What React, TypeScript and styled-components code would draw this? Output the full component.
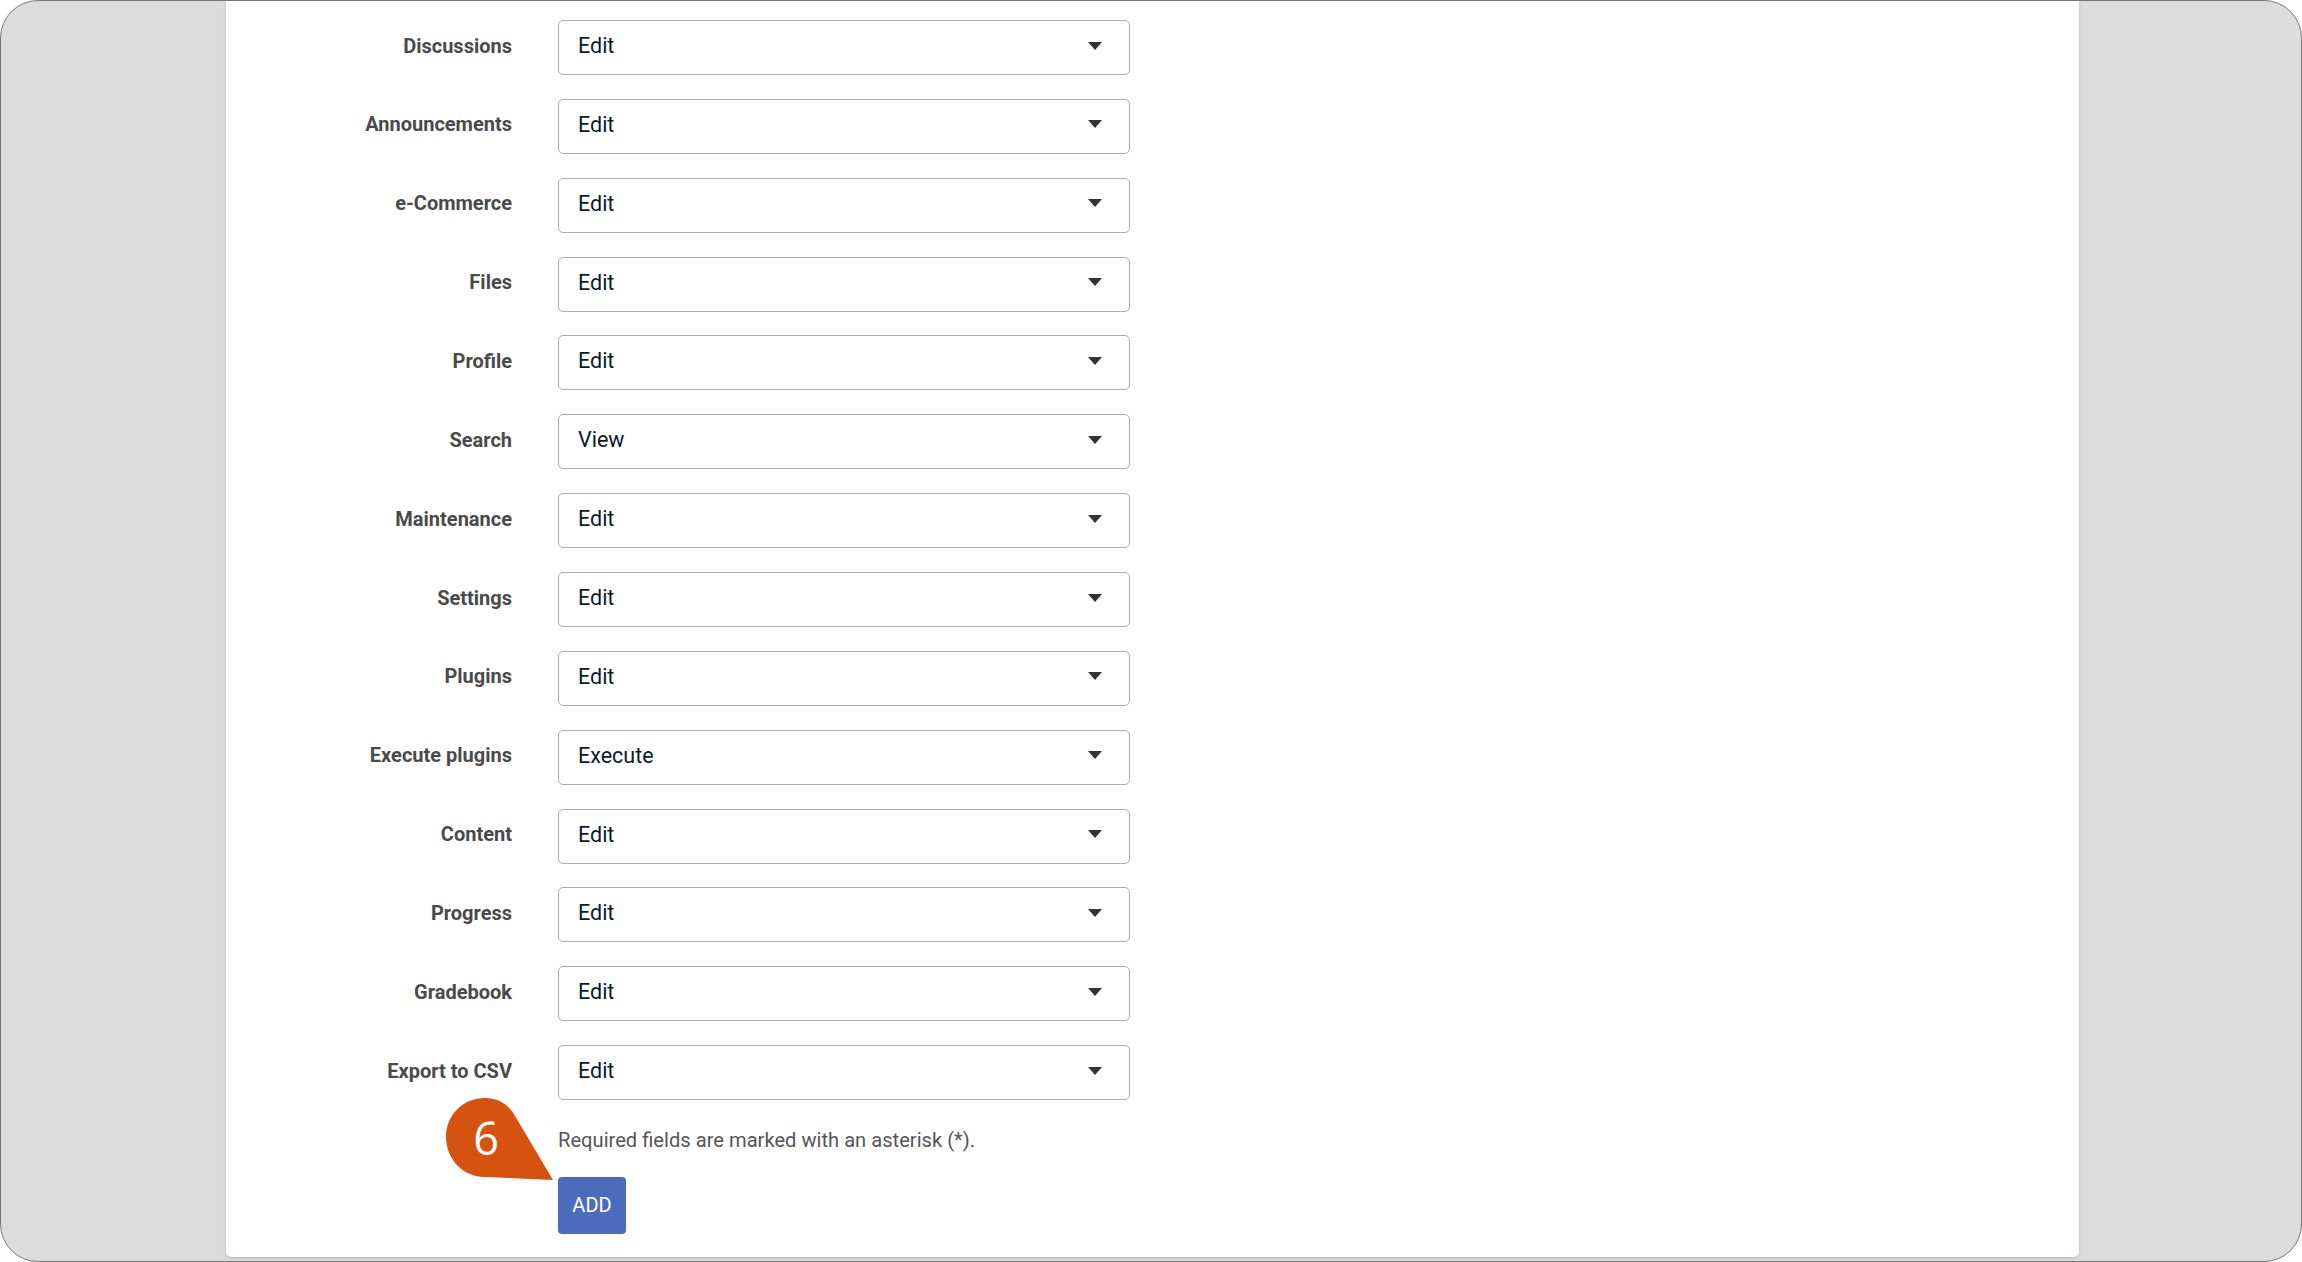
import React from "react";
import styled, { createGlobalStyle } from "styled-components";

const Global = createGlobalStyle`
  html, body { margin: 0; padding: 0; background: #ffffff; }
  body { width: 2302px; height: 1262px; overflow: hidden; font-family: Roboto, "Liberation Sans", sans-serif; }
`;

const Frame = styled.div`
  box-sizing: border-box;
  width: 2302px;
  height: 1262px;
  background: #dcdcdc;
  border: 1.5px solid #777777;
  border-radius: 38px;
  display: flex;
  justify-content: center;
  align-items: flex-start;
  overflow: hidden;
`;

const Panel = styled.main`
  position: relative;
  box-sizing: border-box;
  width: 1853px;
  height: 1255.5px;
  margin-left: 3px;
  padding-top: 19px;
  background: #ffffff;
  border-radius: 0 0 5px 5px;
  box-shadow: 0 1px 3px rgba(120, 130, 180, 0.45);
`;

const Form = styled.form`
  display: flex;
  flex-direction: column;
  gap: 23.87px;
`;

const Row = styled.div`
  display: grid;
  grid-template-columns: 286px 572px;
  column-gap: 46px;
  align-items: center;
`;

const Label = styled.label`
  text-align: right;
  font-size: 20px;
  font-weight: 700;
  color: #4a4a4a;
  padding-bottom: 4px;
`;

const Select = styled.div`
  box-sizing: border-box;
  height: 55px;
  display: flex;
  align-items: center;
  justify-content: space-between;
  padding: 0 27px 4px 19px;
  background: #ffffff;
  border: 1.5px solid #ababab;
  border-radius: 5px;
  font-size: 21.5px;
  color: #0c1a26;
`;

const Caret = styled.svg`
  width: 14px;
  height: 8px;
  fill: #333333;
`;

const Note = styled.p`
  margin: 27.5px 0 0 332px;
  font-size: 20.15px;
  line-height: 24px;
  color: #555555;
`;

const AddButton = styled.button`
  display: block;
  box-sizing: border-box;
  width: 68px;
  height: 56.5px;
  margin: 25.5px 0 0 332px;
  padding: 0;
  border: 0;
  border-radius: 4px;
  background: #4c6bbd;
  color: #ffffff;
  font-family: inherit;
  font-size: 20px;
  font-weight: 400;
`;

const Callout = styled.div`
  position: absolute;
  left: 220px;
  top: 1097px;
  width: 110px;
  height: 84px;
`;

const CalloutShape = styled.svg`
  display: block;
  width: 110px;
  height: 84px;
  fill: #d6520f;
`;

const CalloutNumber = styled.span`
  position: absolute;
  left: 20px;
  top: 10px;
  width: 40px;
  text-align: center;
  font-family: "Open Sans", sans-serif;
  font-size: 45px;
  line-height: 60px;
  color: #ffffff;
`;

const rows: [string, string][] = [
  ["Discussions", "Edit"],
  ["Announcements", "Edit"],
  ["e-Commerce", "Edit"],
  ["Files", "Edit"],
  ["Profile", "Edit"],
  ["Search", "View"],
  ["Maintenance", "Edit"],
  ["Settings", "Edit"],
  ["Plugins", "Edit"],
  ["Execute plugins", "Execute"],
  ["Content", "Edit"],
  ["Progress", "Edit"],
  ["Gradebook", "Edit"],
  ["Export to CSV", "Edit"],
];

export default function App() {
  return (
    <>
      <Global />
      <Frame>
        <Panel>
          <Form>
            {rows.map(([name, value]) => (
              <Row key={name}>
                <Label>{name}</Label>
                <Select>
                  {value}
                  <Caret viewBox="0 0 14 8">
                    <path d="M0 0h14L7 8z" />
                  </Caret>
                </Select>
              </Row>
            ))}
          </Form>
          <Note>Required fields are marked with an asterisk (*).</Note>
          <AddButton type="button">ADD</AddButton>
          <Callout>
            <CalloutShape viewBox="0 0 110 84">
              <path d="M39 0C53 0 63 7 69 18L107 82L39 79C17 79 0 61 0 39C0 17 17 0 39 0Z" />
            </CalloutShape>
            <CalloutNumber>6</CalloutNumber>
          </Callout>
        </Panel>
      </Frame>
    </>
  );
}
